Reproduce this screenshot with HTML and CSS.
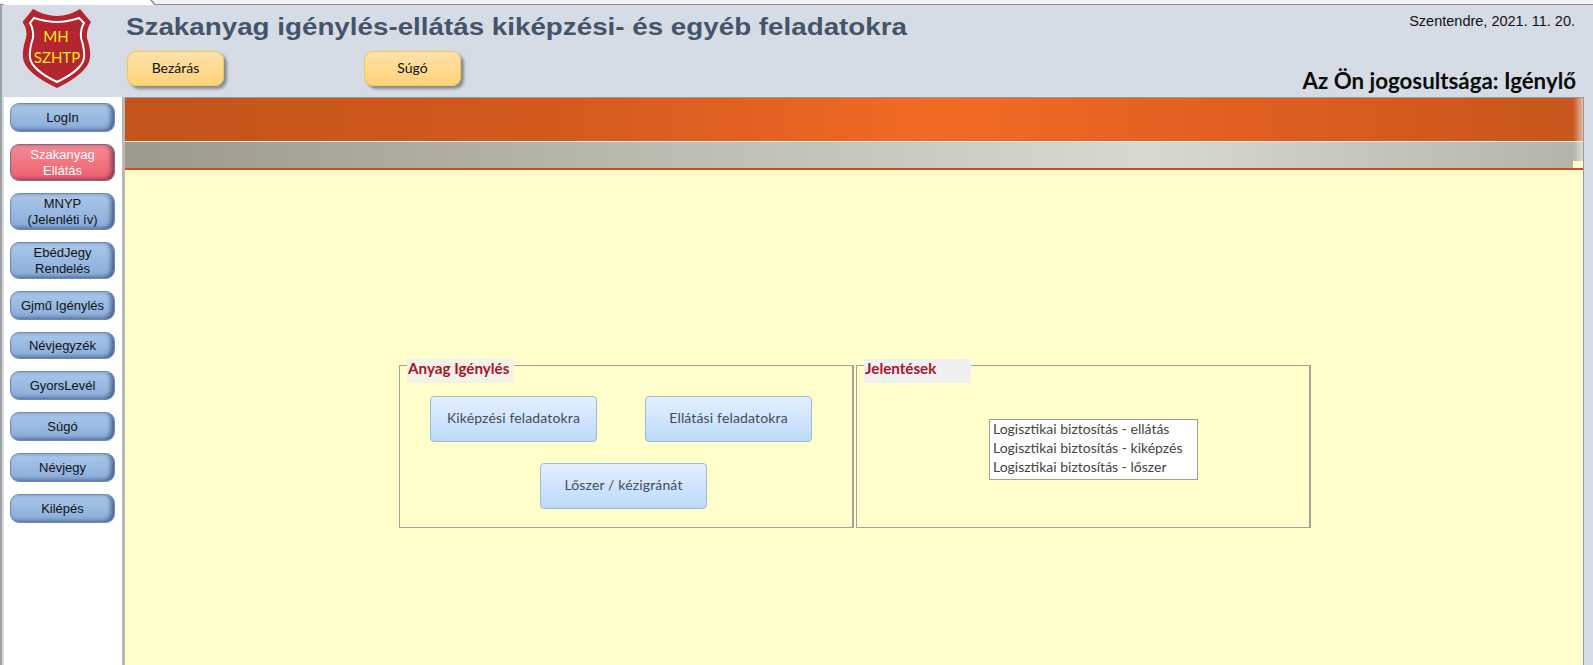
FILE: index.html
```html
<!DOCTYPE html>
<html lang="hu">
<head>
<meta charset="utf-8">
<title>Szakanyag igénylés-ellátás</title>
<link rel="stylesheet" href="styles.css">
</head>
<body>
<div class="app">
  <div class="topstrip"><div class="tab"></div></div>
  <header class="header">
    <div class="logo">
      <svg width="70" height="81" viewBox="0 0 70 81">
        <path fill="#b3252f" d="M.5 14 11 1Q23 8 35 8T58 1L69 14Q64 22 65 30 69 42 68 50 66 65 35 80 3 65 1 50 0 42 4 30 6 22 .5 14Z"/>
        <path fill="none" stroke="#fff" stroke-width="2" d="M8 15 12 10Q25 14 35 14T57 10L62 15Q58 22 59 30 63 42 62 50 60 62 35 74 10 62 8 50 7 42 11 30 12 22 8 15Z"/>
        <text class="logo-text" x="34" y="34" text-anchor="middle">MH</text>
        <text class="logo-text" x="35" y="55" text-anchor="middle">SZHTP</text>
      </svg>
    </div>
    <div class="head-mid">
      <h1 class="title">Szakanyag igénylés-ellátás kiképzési- és egyéb feladatokra</h1>
      <div class="head-btns">
        <button class="gold-btn">Bezárás</button>
        <button class="gold-btn">Súgó</button>
      </div>
    </div>
    <div class="head-right">
      <div class="date">Szentendre, 2021. 11. 20.</div>
      <div class="role">Az Ön jogosultsága: Igénylő</div>
    </div>
  </header>
  <div class="body-row">
    <nav class="side">
      <button class="nav-btn">LogIn</button>
      <button class="nav-btn tall active">Szakanyag<br>Ellátás</button>
      <button class="nav-btn tall">MNYP<br>(Jelenléti ív)</button>
      <button class="nav-btn tall">EbédJegy<br>Rendelés</button>
      <button class="nav-btn">Gjmű Igénylés</button>
      <button class="nav-btn short">Névjegyzék</button>
      <button class="nav-btn">GyorsLevél</button>
      <button class="nav-btn">Súgó</button>
      <button class="nav-btn">Névjegy</button>
      <button class="nav-btn">Kilépés</button>
    </nav>
    <main class="main">
      <div class="band-orange"></div>
      <div class="band-gray"></div>
      <div class="content">
        <section class="group group-a">
          <div class="legend">Anyag Igénylés</div>
          <div class="btn-row btn-row-a">
            <button class="blue-btn">Kiképzési feladatokra</button>
            <button class="blue-btn">Ellátási feladatokra</button>
          </div>
          <div class="btn-row btn-row-b">
            <button class="blue-btn">Lőszer / kézigránát</button>
          </div>
        </section>
        <section class="group group-b">
          <div class="legend">Jelentések</div>
          <ul class="list">
            <li>Logisztikai biztosítás - ellátás</li>
            <li>Logisztikai biztosítás - kiképzés</li>
            <li>Logisztikai biztosítás - lőszer</li>
          </ul>
        </section>
      </div>
    </main>
  </div>
</div>
</body>
</html>
```
FILE: styles.css
```css
* { box-sizing: border-box; }
html, body { margin: 0; padding: 0; }
body { width: 1593px; height: 665px; overflow: hidden; background: #d6dce5; font-family: "Liberation Sans", Arial, sans-serif; }
.app { width: 1593px; height: 665px; display: flex; flex-direction: column; border-left: 2px solid #a0a0a0; }
.topstrip { height: 5px; margin-left: -2px; background: #f4f4f4; border-bottom: 1px solid #8f8f8f; display: flex; }
.tab { width: 152px; height: 5px; background: #fff; border-right: 2px solid #8f8f8f; transform: skewX(40deg); transform-origin: top left; }
.header { height: 92px; display: flex; background: #d6dce5; }
.logo { width: 124px; padding: 3px 0 0 20px; flex: none; }
.logo svg { display: block; }
.logo-text { font-family: Lato, sans-serif; font-size: 15px; fill: #ffe81a; }
.head-mid { flex: none; width: 800px; }
.title { margin: 0; padding: 5px 0 0 0; font-size: 24px; line-height: 34px; font-weight: bold; color: #44546a; white-space: nowrap; transform: scaleX(1.157); transform-origin: left center; }
.head-btns { display: flex; gap: 140px; margin: 7px 0 0 1px; }
.gold-btn { width: 97px; height: 35px; padding: 0 0 2px; border: 1px solid #f2c851; border-radius: 9px; background: linear-gradient(#ffe2a8, #ffd27a); box-shadow: 3px 3px 3px #8b8b8b; font: 14px Lato, sans-serif; color: #111; }
.head-right { flex: 1; display: flex; flex-direction: column; align-items: flex-end; padding-right: 17px; }
.date { font-size: 14.5px; line-height: 16px; margin-top: 8px; color: #111; margin-right: 1px; }
.role { margin-top: 38px; font: bold 22.3px/28px Lato, sans-serif; color: #0c0c0c; }
.body-row { flex: 1; display: flex; min-height: 0; }
.side { width: 121px; flex: none; background: #fff; border-right: 3px solid #b8b8b8; margin-left: 2px; padding: 6px 0 0 6px; display: flex; flex-direction: column; gap: 12px; align-items: flex-start; }
.nav-btn { width: 105px; height: 29px; padding: 0; border: 1px solid #6d8cb5; border-radius: 9px; background: linear-gradient(#aac7ea, #88acd9); box-shadow: inset -3px -1px 4px rgba(35, 55, 90, .65); font: 13px/16px "Liberation Sans", Arial, sans-serif; color: #111; flex: none; }
.nav-btn.tall { height: 37px; }
.nav-btn.short { height: 27px; }
.nav-btn.active { background: linear-gradient(#f58a94, #ef5f6e); border-color: #7a6f90; box-shadow: inset -3px -1px 4px rgba(90, 35, 60, .65); color: #fff; }
.main { width: 1459px; flex: none; background: #ffffcc; border-top: 1px solid #9a9a9a; border-right: 1px solid #9a9a9a; display: flex; flex-direction: column; }
.band-orange { height: 44px; flex: none; background: linear-gradient(90deg, rgba(255,255,255,0) calc(100% - 10px), rgba(255,255,255,.6) 100%), linear-gradient(90deg, #c2541c 0%, #d35a1f 30%, #f36a25 56%, #dd5d20 80%, #c5561d 100%); border-bottom: 1px solid #f3f0e6; }
.band-gray { height: 28px; flex: none; background: linear-gradient(#ffffcc, #ffffcc) no-repeat right bottom / 10px 7px, linear-gradient(90deg, rgba(255,255,255,0) calc(100% - 10px), rgba(255,255,255,.5) 100%), linear-gradient(90deg, #9c9a8c 0%, #d9d9d2 70%, #b4b3a9 100%); border-bottom: 2px solid #c9501a; }
.content { flex: 1; display: flex; gap: 2px; padding: 195px 0 0 274px; align-items: flex-start; }
.group { position: relative; height: 163px; border: 1px solid #a3a39a; border-width: 1px 2px 1px 1px; flex: none; }
.group-a { width: 455px; }
.group-b { width: 455px; }
.legend { position: absolute; left: 7px; top: -7px; width: 107px; height: 24px; background: #f0f0f0; padding: 0 0 0 1px; font: bold 15.2px/19px Lato, sans-serif; color: #a8142a; }
.group-a .legend { background: #f2f2e6; }
.btn-row { display: flex; }
.btn-row-a { padding: 30px 0 0 30px; gap: 48px; }
.btn-row-b { padding: 21px 0 0 140px; }
.blue-btn { width: 167px; height: 46px; padding: 0 0 3px; border: 1px solid #9cbbd6; border-radius: 4px; background: linear-gradient(#e4f0ff, #bcdafa); font: 14px Lato, sans-serif; color: #444c58; letter-spacing: .15px; }
.list { list-style: none; margin: 53px 0 0 132px; padding: 0 0 0 3px; width: 209px; height: 61px; background: #fff; border: 1px solid #a3a38c; font: 14px/19px Lato, sans-serif; color: #444; }
.list li:first-child { margin-top: -1px; }
```
